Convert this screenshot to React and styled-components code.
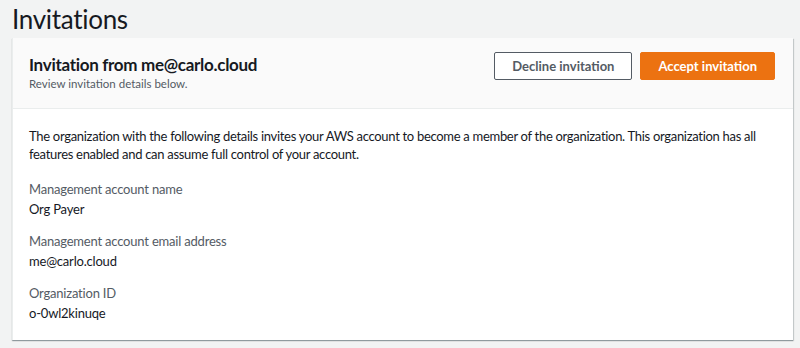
import React from 'react'
import styled, { createGlobalStyle } from 'styled-components'

const GlobalStyle = createGlobalStyle`
  body {
    margin: 0;
    background: #f2f3f3;
    font-family: Lato, "Noto Sans", Arial, sans-serif;
    color: #16191f;
  }
`

const Page = styled.div`
  padding: 0 8px 0 12px;
  height: 348px;
  box-sizing: border-box;
  overflow: hidden;
`

const PageTitle = styled.h1`
  margin: 0;
  padding-top: 2px;
  height: 36px;
  font-size: 26px;
  font-weight: 400;
  letter-spacing: -0.3px;
  line-height: 34px;
  color: #16191f;
`

const Card = styled.div`
  background: #fff;
  border-left: 1px solid #eaeded;
  box-shadow: 0 1px 1px 0 rgba(0, 28, 36, 0.3), 1px 1px 1px 0 rgba(0, 28, 36, 0.15);
  width: 780px;
`

const CardHeader = styled.div`
  display: flex;
  align-items: flex-start;
  justify-content: space-between;
  background: #fafafa;
  border-bottom: 1px solid #eaeded;
  padding: 14px 18px 16px 16px;
`

const HeaderText = styled.div`
  display: flex;
  flex-direction: column;
  padding-top: 2px;
`

const CardTitle = styled.h2`
  margin: 0;
  font-size: 17px;
  font-weight: 700;
  letter-spacing: -0.3px;
  line-height: 22px;
`

const CardSubtitle = styled.div`
  font-size: 11.5px;
  line-height: 16px;
  color: #545b64;
`

const Actions = styled.div`
  display: flex;
  gap: 8px;
`

const Button = styled.button`
  height: 28px;
  padding: 0 17px;
  border-radius: 2px;
  font-family: inherit;
  font-size: 13px;
  font-weight: 700;
  border: 1px solid ${p => (p.$primary ? '#ec7211' : '#545b64')};
  background: ${p => (p.$primary ? '#ec7211' : '#fff')};
  color: ${p => (p.$primary ? '#fff' : '#545b64')};
  cursor: pointer;
`

const CardBody = styled.div`
  display: flex;
  flex-direction: column;
  gap: 11px;
  padding: 18px 17px 16px 16px;
`

const Intro = styled.p`
  margin: 0 0 5px 0;
  font-size: 13px;
  letter-spacing: -0.3px;
  line-height: 18px;
`

const Field = styled.div`
  display: flex;
  flex-direction: column;
`

const Label = styled.div`
  font-size: 13px;
  letter-spacing: -0.2px;
  line-height: 20px;
  color: #545b64;
`

const Value = styled.div`
  font-size: 13px;
  letter-spacing: -0.2px;
  line-height: 21px;
`

const details = [
  { label: 'Management account name', value: 'Org Payer' },
  { label: 'Management account email address', value: 'me@carlo.cloud' },
  { label: 'Organization ID', value: 'o-0wl2kinuqe' },
]

const App = () => {
  return (
    <Page>
      <GlobalStyle />
      <PageTitle>Invitations</PageTitle>
      <Card>
        <CardHeader>
          <HeaderText>
            <CardTitle>Invitation from me@carlo.cloud</CardTitle>
            <CardSubtitle>Review invitation details below.</CardSubtitle>
          </HeaderText>
          <Actions>
            <Button>Decline invitation</Button>
            <Button $primary>Accept invitation</Button>
          </Actions>
        </CardHeader>
        <CardBody>
          <Intro>
            The organization with the following details invites your AWS account to become a member of the
            organization. This organization has all features enabled and can assume full control of your account.
          </Intro>
          {details.map((d, i) => (
            <Field key={i}>
              <Label>{d.label}</Label>
              <Value>{d.value}</Value>
            </Field>
          ))}
        </CardBody>
      </Card>
    </Page>
  )
}

export default App
